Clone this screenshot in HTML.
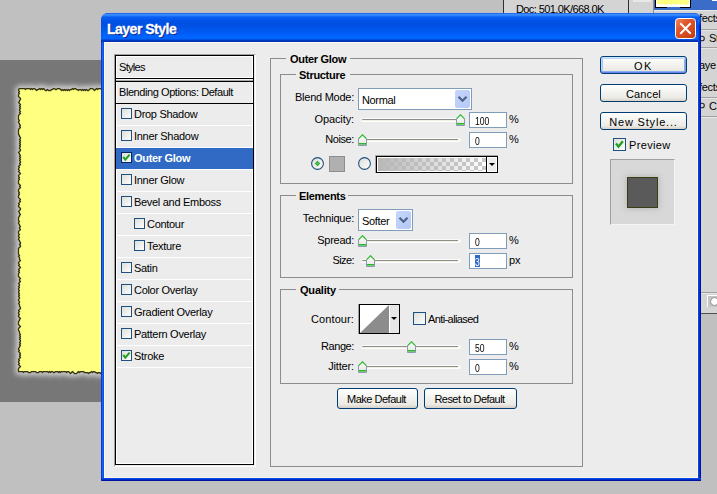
<!DOCTYPE html>
<html><head><meta charset="utf-8"><title>Layer Style</title>
<style>
html,body{margin:0;padding:0;width:717px;height:494px;overflow:hidden;background:#c0c0c0}
body{position:relative;font-family:"Liberation Sans",sans-serif}
body>div{position:absolute}
.t{white-space:nowrap}
</style></head><body>
<div style="left:0px;top:0px;width:717px;height:494px;background:#c0c0c0"></div>
<div style="left:0px;top:60px;width:110px;height:342px;background:#777777"></div>
<svg style="position:absolute;left:0;top:0" width="120" height="420" viewBox="0 0 120 420">
<defs><filter id="gl" x="-20%" y="-20%" width="140%" height="140%"><feGaussianBlur stdDeviation="2.6"/></filter></defs>
<polygon points="19.5,88.5 20.5,88.5 21.5,88.5 22.5,88.5 23.5,88.5 24.5,88.5 25.5,89.5 26.5,88.5 27.5,88.5 28.5,88.5 29.5,88.5 30.5,89.5 31.5,88.5 32.5,89.5 33.5,88.5 34.5,88.5 35.5,89.5 36.5,90.5 37.5,89.5 38.5,89.5 39.5,88.5 40.5,89.5 41.5,88.5 42.5,89.5 43.5,88.5 44.5,89.5 45.5,90.5 46.5,90.5 47.5,89.5 48.5,90.5 49.5,90.5 50.5,90.5 51.5,89.5 52.5,89.5 53.5,88.5 54.5,88.5 55.5,89.5 56.5,89.5 57.5,88.5 58.5,88.5 59.5,88.5 60.5,89.5 61.5,90.5 62.5,89.5 63.5,90.5 64.5,89.5 65.5,90.5 66.5,89.5 67.5,90.5 68.5,89.5 69.5,90.5 70.5,89.5 71.5,89.5 72.5,88.5 73.5,89.5 74.5,88.5 75.5,88.5 76.5,89.5 77.5,89.5 78.5,90.5 79.5,89.5 80.5,89.5 81.5,90.5 82.5,89.5 83.5,90.5 84.5,89.5 85.5,90.5 86.5,89.5 87.5,90.5 88.5,90.5 89.5,89.5 90.5,88.5 91.5,88.5 92.5,88.5 93.5,89.5 94.5,90.5 95.5,89.5 96.5,88.5 97.5,89.5 98.5,88.5 99.5,88.5 100.5,88.5 101.5,89.5 102.5,89.5 103.5,90.5 104.5,89.5 105.5,88.5 106.5,88.5 107.5,89.5 108.5,89.5 109.5,88.5 110.5,89.5 111.5,90.5 112.5,89.5 113.5,90.5 114.5,89.5 115,88.5 115,372.5 114.5,371.5 113.5,371.5 112.5,372.5 111.5,373.5 110.5,373.5 109.5,372.5 108.5,371.5 107.5,372.5 106.5,371.5 105.5,371.5 104.5,371.5 103.5,371.5 102.5,372.5 101.5,372.5 100.5,373.5 99.5,372.5 98.5,372.5 97.5,373.5 96.5,372.5 95.5,372.5 94.5,371.5 93.5,371.5 92.5,372.5 91.5,371.5 90.5,372.5 89.5,372.5 88.5,373.5 87.5,372.5 86.5,372.5 85.5,372.5 84.5,372.5 83.5,371.5 82.5,371.5 81.5,371.5 80.5,371.5 79.5,372.5 78.5,371.5 77.5,372.5 76.5,373.5 75.5,373.5 74.5,373.5 73.5,372.5 72.5,371.5 71.5,372.5 70.5,373.5 69.5,372.5 68.5,371.5 67.5,371.5 66.5,372.5 65.5,371.5 64.5,371.5 63.5,371.5 62.5,371.5 61.5,371.5 60.5,372.5 59.5,371.5 58.5,372.5 57.5,371.5 56.5,371.5 55.5,371.5 54.5,372.5 53.5,372.5 52.5,371.5 51.5,371.5 50.5,372.5 49.5,371.5 48.5,372.5 47.5,371.5 46.5,371.5 45.5,371.5 44.5,371.5 43.5,371.5 42.5,372.5 41.5,371.5 40.5,371.5 39.5,371.5 38.5,372.5 37.5,372.5 36.5,372.5 35.5,371.5 34.5,371.5 33.5,371.5 32.5,371.5 31.5,371.5 30.5,372.5 29.5,372.5 28.5,372.5 27.5,371.5 26.5,371.5 25.5,371.5 24.5,371.5 23.5,372.5 22.5,371.5 21.5,371.5 20.5,371.5 19.5,371.5 18.5,371.5 18.5,370.5 18.5,369.5 18.5,368.5 19.5,367.5 20.5,366.5 19.5,365.5 18.5,364.5 19.5,363.5 18.5,362.5 18.5,361.5 19.5,360.5 18.5,359.5 19.5,358.5 20.5,357.5 19.5,356.5 20.5,355.5 19.5,354.5 20.5,353.5 19.5,352.5 18.5,351.5 19.5,350.5 18.5,349.5 18.5,348.5 19.5,347.5 19.5,346.5 20.5,345.5 19.5,344.5 20.5,343.5 19.5,342.5 20.5,341.5 20.5,340.5 19.5,339.5 20.5,338.5 19.5,337.5 20.5,336.5 19.5,335.5 20.5,334.5 19.5,333.5 19.5,332.5 19.5,331.5 18.5,330.5 18.5,329.5 18.5,328.5 19.5,327.5 20.5,326.5 19.5,325.5 18.5,324.5 18.5,323.5 18.5,322.5 18.5,321.5 19.5,320.5 19.5,319.5 20.5,318.5 19.5,317.5 18.5,316.5 18.5,315.5 19.5,314.5 18.5,313.5 18.5,312.5 19.5,311.5 18.5,310.5 19.5,309.5 20.5,308.5 20.5,307.5 19.5,306.5 19.5,305.5 19.5,304.5 18.5,303.5 19.5,302.5 19.5,301.5 18.5,300.5 18.5,299.5 19.5,298.5 19.5,297.5 18.5,296.5 19.5,295.5 18.5,294.5 19.5,293.5 18.5,292.5 18.5,291.5 19.5,290.5 18.5,289.5 18.5,288.5 19.5,287.5 18.5,286.5 19.5,285.5 19.5,284.5 18.5,283.5 19.5,282.5 20.5,281.5 19.5,280.5 19.5,279.5 20.5,278.5 19.5,277.5 18.5,276.5 18.5,275.5 18.5,274.5 18.5,273.5 19.5,272.5 18.5,271.5 19.5,270.5 18.5,269.5 19.5,268.5 20.5,267.5 19.5,266.5 18.5,265.5 19.5,264.5 18.5,263.5 18.5,262.5 19.5,261.5 20.5,260.5 19.5,259.5 19.5,258.5 19.5,257.5 18.5,256.5 19.5,255.5 18.5,254.5 18.5,253.5 18.5,252.5 18.5,251.5 18.5,250.5 18.5,249.5 18.5,248.5 19.5,247.5 20.5,246.5 20.5,245.5 19.5,244.5 20.5,243.5 20.5,242.5 19.5,241.5 19.5,240.5 18.5,239.5 18.5,238.5 19.5,237.5 18.5,236.5 18.5,235.5 19.5,234.5 18.5,233.5 18.5,232.5 18.5,231.5 19.5,230.5 20.5,229.5 19.5,228.5 19.5,227.5 20.5,226.5 19.5,225.5 19.5,224.5 18.5,223.5 18.5,222.5 19.5,221.5 18.5,220.5 18.5,219.5 18.5,218.5 18.5,217.5 19.5,216.5 19.5,215.5 20.5,214.5 19.5,213.5 19.5,212.5 18.5,211.5 19.5,210.5 20.5,209.5 20.5,208.5 19.5,207.5 18.5,206.5 18.5,205.5 19.5,204.5 18.5,203.5 19.5,202.5 20.5,201.5 19.5,200.5 20.5,199.5 19.5,198.5 18.5,197.5 18.5,196.5 18.5,195.5 19.5,194.5 18.5,193.5 19.5,192.5 18.5,191.5 18.5,190.5 18.5,189.5 19.5,188.5 20.5,187.5 19.5,186.5 20.5,185.5 19.5,184.5 18.5,183.5 18.5,182.5 18.5,181.5 18.5,180.5 19.5,179.5 18.5,178.5 19.5,177.5 18.5,176.5 18.5,175.5 19.5,174.5 20.5,173.5 19.5,172.5 18.5,171.5 19.5,170.5 18.5,169.5 18.5,168.5 19.5,167.5 18.5,166.5 19.5,165.5 20.5,164.5 19.5,163.5 20.5,162.5 20.5,161.5 19.5,160.5 20.5,159.5 19.5,158.5 20.5,157.5 19.5,156.5 20.5,155.5 19.5,154.5 19.5,153.5 18.5,152.5 19.5,151.5 20.5,150.5 20.5,149.5 19.5,148.5 19.5,147.5 20.5,146.5 19.5,145.5 20.5,144.5 19.5,143.5 20.5,142.5 19.5,141.5 20.5,140.5 19.5,139.5 20.5,138.5 20.5,137.5 19.5,136.5 19.5,135.5 18.5,134.5 18.5,133.5 18.5,132.5 18.5,131.5 18.5,130.5 18.5,129.5 19.5,128.5 20.5,127.5 19.5,126.5 20.5,125.5 19.5,124.5 19.5,123.5 18.5,122.5 18.5,121.5 19.5,120.5 18.5,119.5 18.5,118.5 18.5,117.5 18.5,116.5 18.5,115.5 19.5,114.5 20.5,113.5 19.5,112.5 20.5,111.5 19.5,110.5 19.5,109.5 20.5,108.5 19.5,107.5 20.5,106.5 19.5,105.5 20.5,104.5 19.5,103.5 18.5,102.5 19.5,101.5 19.5,100.5 20.5,99.5 20.5,98.5 19.5,97.5 18.5,96.5 18.5,95.5 18.5,94.5 19.5,93.5 18.5,92.5 19.5,91.5 18.5,90.5 18.5,89.5 19.5,88.5" fill="none" stroke="#d0d0d0" stroke-width="6" filter="url(#gl)"/>
<polygon points="19.5,88.5 20.5,88.5 21.5,88.5 22.5,88.5 23.5,88.5 24.5,88.5 25.5,89.5 26.5,88.5 27.5,88.5 28.5,88.5 29.5,88.5 30.5,89.5 31.5,88.5 32.5,89.5 33.5,88.5 34.5,88.5 35.5,89.5 36.5,90.5 37.5,89.5 38.5,89.5 39.5,88.5 40.5,89.5 41.5,88.5 42.5,89.5 43.5,88.5 44.5,89.5 45.5,90.5 46.5,90.5 47.5,89.5 48.5,90.5 49.5,90.5 50.5,90.5 51.5,89.5 52.5,89.5 53.5,88.5 54.5,88.5 55.5,89.5 56.5,89.5 57.5,88.5 58.5,88.5 59.5,88.5 60.5,89.5 61.5,90.5 62.5,89.5 63.5,90.5 64.5,89.5 65.5,90.5 66.5,89.5 67.5,90.5 68.5,89.5 69.5,90.5 70.5,89.5 71.5,89.5 72.5,88.5 73.5,89.5 74.5,88.5 75.5,88.5 76.5,89.5 77.5,89.5 78.5,90.5 79.5,89.5 80.5,89.5 81.5,90.5 82.5,89.5 83.5,90.5 84.5,89.5 85.5,90.5 86.5,89.5 87.5,90.5 88.5,90.5 89.5,89.5 90.5,88.5 91.5,88.5 92.5,88.5 93.5,89.5 94.5,90.5 95.5,89.5 96.5,88.5 97.5,89.5 98.5,88.5 99.5,88.5 100.5,88.5 101.5,89.5 102.5,89.5 103.5,90.5 104.5,89.5 105.5,88.5 106.5,88.5 107.5,89.5 108.5,89.5 109.5,88.5 110.5,89.5 111.5,90.5 112.5,89.5 113.5,90.5 114.5,89.5 115,88.5 115,372.5 114.5,371.5 113.5,371.5 112.5,372.5 111.5,373.5 110.5,373.5 109.5,372.5 108.5,371.5 107.5,372.5 106.5,371.5 105.5,371.5 104.5,371.5 103.5,371.5 102.5,372.5 101.5,372.5 100.5,373.5 99.5,372.5 98.5,372.5 97.5,373.5 96.5,372.5 95.5,372.5 94.5,371.5 93.5,371.5 92.5,372.5 91.5,371.5 90.5,372.5 89.5,372.5 88.5,373.5 87.5,372.5 86.5,372.5 85.5,372.5 84.5,372.5 83.5,371.5 82.5,371.5 81.5,371.5 80.5,371.5 79.5,372.5 78.5,371.5 77.5,372.5 76.5,373.5 75.5,373.5 74.5,373.5 73.5,372.5 72.5,371.5 71.5,372.5 70.5,373.5 69.5,372.5 68.5,371.5 67.5,371.5 66.5,372.5 65.5,371.5 64.5,371.5 63.5,371.5 62.5,371.5 61.5,371.5 60.5,372.5 59.5,371.5 58.5,372.5 57.5,371.5 56.5,371.5 55.5,371.5 54.5,372.5 53.5,372.5 52.5,371.5 51.5,371.5 50.5,372.5 49.5,371.5 48.5,372.5 47.5,371.5 46.5,371.5 45.5,371.5 44.5,371.5 43.5,371.5 42.5,372.5 41.5,371.5 40.5,371.5 39.5,371.5 38.5,372.5 37.5,372.5 36.5,372.5 35.5,371.5 34.5,371.5 33.5,371.5 32.5,371.5 31.5,371.5 30.5,372.5 29.5,372.5 28.5,372.5 27.5,371.5 26.5,371.5 25.5,371.5 24.5,371.5 23.5,372.5 22.5,371.5 21.5,371.5 20.5,371.5 19.5,371.5 18.5,371.5 18.5,370.5 18.5,369.5 18.5,368.5 19.5,367.5 20.5,366.5 19.5,365.5 18.5,364.5 19.5,363.5 18.5,362.5 18.5,361.5 19.5,360.5 18.5,359.5 19.5,358.5 20.5,357.5 19.5,356.5 20.5,355.5 19.5,354.5 20.5,353.5 19.5,352.5 18.5,351.5 19.5,350.5 18.5,349.5 18.5,348.5 19.5,347.5 19.5,346.5 20.5,345.5 19.5,344.5 20.5,343.5 19.5,342.5 20.5,341.5 20.5,340.5 19.5,339.5 20.5,338.5 19.5,337.5 20.5,336.5 19.5,335.5 20.5,334.5 19.5,333.5 19.5,332.5 19.5,331.5 18.5,330.5 18.5,329.5 18.5,328.5 19.5,327.5 20.5,326.5 19.5,325.5 18.5,324.5 18.5,323.5 18.5,322.5 18.5,321.5 19.5,320.5 19.5,319.5 20.5,318.5 19.5,317.5 18.5,316.5 18.5,315.5 19.5,314.5 18.5,313.5 18.5,312.5 19.5,311.5 18.5,310.5 19.5,309.5 20.5,308.5 20.5,307.5 19.5,306.5 19.5,305.5 19.5,304.5 18.5,303.5 19.5,302.5 19.5,301.5 18.5,300.5 18.5,299.5 19.5,298.5 19.5,297.5 18.5,296.5 19.5,295.5 18.5,294.5 19.5,293.5 18.5,292.5 18.5,291.5 19.5,290.5 18.5,289.5 18.5,288.5 19.5,287.5 18.5,286.5 19.5,285.5 19.5,284.5 18.5,283.5 19.5,282.5 20.5,281.5 19.5,280.5 19.5,279.5 20.5,278.5 19.5,277.5 18.5,276.5 18.5,275.5 18.5,274.5 18.5,273.5 19.5,272.5 18.5,271.5 19.5,270.5 18.5,269.5 19.5,268.5 20.5,267.5 19.5,266.5 18.5,265.5 19.5,264.5 18.5,263.5 18.5,262.5 19.5,261.5 20.5,260.5 19.5,259.5 19.5,258.5 19.5,257.5 18.5,256.5 19.5,255.5 18.5,254.5 18.5,253.5 18.5,252.5 18.5,251.5 18.5,250.5 18.5,249.5 18.5,248.5 19.5,247.5 20.5,246.5 20.5,245.5 19.5,244.5 20.5,243.5 20.5,242.5 19.5,241.5 19.5,240.5 18.5,239.5 18.5,238.5 19.5,237.5 18.5,236.5 18.5,235.5 19.5,234.5 18.5,233.5 18.5,232.5 18.5,231.5 19.5,230.5 20.5,229.5 19.5,228.5 19.5,227.5 20.5,226.5 19.5,225.5 19.5,224.5 18.5,223.5 18.5,222.5 19.5,221.5 18.5,220.5 18.5,219.5 18.5,218.5 18.5,217.5 19.5,216.5 19.5,215.5 20.5,214.5 19.5,213.5 19.5,212.5 18.5,211.5 19.5,210.5 20.5,209.5 20.5,208.5 19.5,207.5 18.5,206.5 18.5,205.5 19.5,204.5 18.5,203.5 19.5,202.5 20.5,201.5 19.5,200.5 20.5,199.5 19.5,198.5 18.5,197.5 18.5,196.5 18.5,195.5 19.5,194.5 18.5,193.5 19.5,192.5 18.5,191.5 18.5,190.5 18.5,189.5 19.5,188.5 20.5,187.5 19.5,186.5 20.5,185.5 19.5,184.5 18.5,183.5 18.5,182.5 18.5,181.5 18.5,180.5 19.5,179.5 18.5,178.5 19.5,177.5 18.5,176.5 18.5,175.5 19.5,174.5 20.5,173.5 19.5,172.5 18.5,171.5 19.5,170.5 18.5,169.5 18.5,168.5 19.5,167.5 18.5,166.5 19.5,165.5 20.5,164.5 19.5,163.5 20.5,162.5 20.5,161.5 19.5,160.5 20.5,159.5 19.5,158.5 20.5,157.5 19.5,156.5 20.5,155.5 19.5,154.5 19.5,153.5 18.5,152.5 19.5,151.5 20.5,150.5 20.5,149.5 19.5,148.5 19.5,147.5 20.5,146.5 19.5,145.5 20.5,144.5 19.5,143.5 20.5,142.5 19.5,141.5 20.5,140.5 19.5,139.5 20.5,138.5 20.5,137.5 19.5,136.5 19.5,135.5 18.5,134.5 18.5,133.5 18.5,132.5 18.5,131.5 18.5,130.5 18.5,129.5 19.5,128.5 20.5,127.5 19.5,126.5 20.5,125.5 19.5,124.5 19.5,123.5 18.5,122.5 18.5,121.5 19.5,120.5 18.5,119.5 18.5,118.5 18.5,117.5 18.5,116.5 18.5,115.5 19.5,114.5 20.5,113.5 19.5,112.5 20.5,111.5 19.5,110.5 19.5,109.5 20.5,108.5 19.5,107.5 20.5,106.5 19.5,105.5 20.5,104.5 19.5,103.5 18.5,102.5 19.5,101.5 19.5,100.5 20.5,99.5 20.5,98.5 19.5,97.5 18.5,96.5 18.5,95.5 18.5,94.5 19.5,93.5 18.5,92.5 19.5,91.5 18.5,90.5 18.5,89.5 19.5,88.5" fill="#ffff80" stroke="#34320a" stroke-width="1.25" stroke-linejoin="round"/>
</svg>
<div style="left:503px;top:0px;width:214px;height:13px;background:#d4d4d4"></div>
<div style="left:503px;top:0px;width:1px;height:13px;background:#303030"></div>
<div class="t" style="left:516px;top:3px;font:11px/13px 'Liberation Sans',sans-serif;letter-spacing:-0.6px;color:#000;">Doc: 501.0K/668.0K</div>
<div style="left:628px;top:0px;width:1px;height:13px;background:#303030"></div>
<div style="left:633px;top:0px;width:18px;height:2px;background:#e8e8e8"></div>
<div style="left:653px;top:0px;width:1px;height:13px;background:#909090"></div>
<div style="left:654px;top:0px;width:63px;height:10px;background:#3a6cc8"></div>
<div style="left:655px;top:0px;width:36px;height:8px;background:#000"></div>
<div style="left:667px;top:7px;width:13px;height:1px;background:#3a6cc8"></div>
<div style="left:656px;top:0px;width:34px;height:7px;background:#fff"></div>
<div style="left:657px;top:0px;width:32px;height:5px;background:#ffff80"></div>
<div style="left:657px;top:4px;width:32px;height:1px;background:repeating-linear-gradient(to right,#fff 0 3px,#ffff80 3px 5px)"></div>
<div style="left:712px;top:0px;width:5px;height:1px;background:#fff"></div>
<div style="left:654px;top:10px;width:63px;height:1px;background:#e8e8e8"></div>
<div style="left:701px;top:11px;width:16px;height:281px;background:#d4d4d4"></div>
<div class="t" style="left:699px;top:12px;font:11px/13px 'Liberation Sans',sans-serif;letter-spacing:-0.3px;color:#000;">fects</div>
<div style="left:701px;top:29px;width:16px;height:1px;background:#a0a0a0"></div>
<div style="left:701px;top:30px;width:16px;height:1px;background:#e6e6e6"></div>
<div class="t" style="left:709px;top:32px;font:11px/13px 'Liberation Sans',sans-serif;letter-spacing:-0.3px;color:#000;">St</div>
<div style="left:701px;top:47px;width:16px;height:1px;background:#a0a0a0"></div>
<div style="left:701px;top:48px;width:16px;height:1px;background:#e6e6e6"></div>
<div class="t" style="left:699px;top:59px;font:11px/13px 'Liberation Sans',sans-serif;letter-spacing:-0.3px;color:#000;">aye</div>
<div class="t" style="left:699px;top:81px;font:11px/13px 'Liberation Sans',sans-serif;letter-spacing:-0.3px;color:#000;">fects</div>
<div style="left:701px;top:97px;width:16px;height:1px;background:#a0a0a0"></div>
<div style="left:701px;top:98px;width:16px;height:1px;background:#e6e6e6"></div>
<div class="t" style="left:709px;top:100px;font:11px/13px 'Liberation Sans',sans-serif;letter-spacing:-0.3px;color:#000;">Co</div>
<svg style="position:absolute;left:699px;top:100px" width="8" height="10"><circle cx="3" cy="5.5" r="2.3" fill="none" stroke="#303030" stroke-width="1.1"/></svg>
<svg style="position:absolute;left:699px;top:33px" width="8" height="10"><circle cx="3" cy="5.5" r="2.3" fill="none" stroke="#303030" stroke-width="1.1"/></svg>
<div style="left:701px;top:116px;width:16px;height:1px;background:#a0a0a0"></div>
<div style="left:701px;top:117px;width:16px;height:1px;background:#e6e6e6"></div>
<div style="left:701px;top:292px;width:16px;height:1px;background:#a0a0a0"></div>
<div style="left:701px;top:293px;width:16px;height:1px;background:#e6e6e6"></div>
<div style="left:701px;top:294px;width:16px;height:19px;background:#d4d4d4"></div>
<div style="left:707px;top:295px;width:12px;height:11px;background:#c4c4c4;border-top:1px solid #fff;border-left:1px solid #fff"></div>
<div style="left:710px;top:297px;width:7px;height:7px;border-radius:50%;background:#fff;border:1px solid #909090"></div>
<div style="left:701px;top:313px;width:16px;height:1px;background:#505050"></div>
<div style="left:101px;top:13px;width:600px;height:468px;background:#0a4ae6;border-radius:7px 7px 0 0"></div>
<div style="left:101px;top:13px;width:600px;height:29px;border-radius:7px 7px 0 0;background:linear-gradient(to bottom,#0a46d4 0px,#3a8cff 1px,#3a8cff 2px,#0a60f4 4px,#0052e6 8px,#0050e2 12px,#005cf6 20px,#0066ff 24px,#0062fa 26px,#0040c8 27px,#0030b0 28px,#0038c0 29px)"></div>
<div style="left:101px;top:42px;width:1px;height:439px;background:#0838d0"></div>
<div style="left:102px;top:42px;width:1px;height:439px;background:#1664f8"></div>
<div style="left:103px;top:42px;width:1px;height:439px;background:#0a52e8"></div>
<div style="left:698px;top:20px;width:1px;height:461px;background:linear-gradient(#3a7cf8,#0842e0 6px)"></div>
<div style="left:699px;top:19px;width:1px;height:462px;background:linear-gradient(#1a5ce8,#0030c8 6px)"></div>
<div style="left:700px;top:21px;width:1px;height:460px;background:linear-gradient(#0a3ad0,#0014a0 6px)"></div>
<div style="left:101px;top:478px;width:600px;height:1px;background:#0848e8"></div>
<div style="left:101px;top:479px;width:600px;height:1px;background:#0030c8"></div>
<div style="left:101px;top:480px;width:600px;height:1px;background:#0012a0"></div>
<div style="left:101px;top:478px;width:1px;height:3px;background:#0830c8"></div>
<div style="left:104px;top:42px;width:594px;height:436px;background:#fdf8e8"></div>
<div style="left:105px;top:43px;width:592px;height:434px;background:#ececec"></div>
<div class="t" style="left:107px;top:21px;font:bold 14px/16px 'Liberation Sans',sans-serif;letter-spacing:-0.5px;color:#fff;-webkit-text-stroke:0.3px #fff;text-shadow:1px 1px 0 #0a1a80">Layer Style</div>
<svg style="position:absolute;left:675px;top:18px" width="21" height="21" viewBox="0 0 21 21">
<defs><linearGradient id="cg" x1="0" y1="0" x2="1" y2="1"><stop offset="0" stop-color="#f08a64"/><stop offset="0.35" stop-color="#e2582c"/><stop offset="1" stop-color="#c43a0c"/></linearGradient></defs>
<rect x="0.5" y="0.5" width="20" height="20" rx="3" fill="url(#cg)" stroke="#fff" stroke-width="1"/>
<path d="M6 6 L15 15 M15 6 L6 15" stroke="#fff" stroke-width="2" stroke-linecap="square"/>
</svg>
<div style="left:114px;top:54px;width:140px;height:411px;border-top:1px solid #a0a0a0;border-left:1px solid #a0a0a0;border-right:1px solid #fff;border-bottom:1px solid #fff"></div>
<div style="left:115px;top:55px;width:139px;height:410px;box-sizing:border-box;border:1px solid #000"></div>
<div style="left:116px;top:56px;width:137px;height:408px;box-sizing:border-box;border:1px solid #fff;background:#ececec"></div>
<div style="left:116px;top:77px;width:137px;height:1px;background:#fff"></div>
<div style="left:116px;top:78px;width:137px;height:1px;background:#000"></div>
<div style="left:116px;top:79px;width:137px;height:1px;background:#f4f4f4"></div>
<div style="left:116px;top:80px;width:137px;height:1px;background:#a8a8a8"></div>
<div style="left:116px;top:81px;width:137px;height:1px;background:#000"></div>
<div style="left:116px;top:103px;width:137px;height:1px;background:#000"></div>
<div class="t" style="left:119px;top:61px;font:11px/13px 'Liberation Sans',sans-serif;letter-spacing:-0.7px;color:#000;">Styles</div>
<div class="t" style="left:119px;top:86px;font:11px/13px 'Liberation Sans',sans-serif;letter-spacing:-0.43px;color:#000;">Blending Options: Default</div>
<svg style="position:absolute;left:121px;top:108px" width="11" height="11" viewBox="0 0 11 11">
<defs><linearGradient id="cb121_108" x1="0" y1="0" x2="1" y2="1"><stop offset="0" stop-color="#dcdcd7"/><stop offset="1" stop-color="#ffffff"/></linearGradient></defs>
<rect x="0.5" y="0.5" width="10" height="10" fill="url(#cb121_108)" stroke="#1c5180"/></svg>
<div class="t" style="left:134px;top:108px;font:11px/13px 'Liberation Sans',sans-serif;letter-spacing:-0.3px;color:#000;">Drop Shadow</div>
<div style="left:116px;top:125px;width:137px;height:1px;background:#fff"></div>
<svg style="position:absolute;left:121px;top:130px" width="11" height="11" viewBox="0 0 11 11">
<defs><linearGradient id="cb121_130" x1="0" y1="0" x2="1" y2="1"><stop offset="0" stop-color="#dcdcd7"/><stop offset="1" stop-color="#ffffff"/></linearGradient></defs>
<rect x="0.5" y="0.5" width="10" height="10" fill="url(#cb121_130)" stroke="#1c5180"/></svg>
<div class="t" style="left:134px;top:130px;font:11px/13px 'Liberation Sans',sans-serif;letter-spacing:-0.3px;color:#000;">Inner Shadow</div>
<div style="left:116px;top:147px;width:137px;height:1px;background:#fff"></div>
<div style="left:116px;top:148px;width:137px;height:21px;background:#316ac5"></div>
<svg style="position:absolute;left:121px;top:152px" width="11" height="11" viewBox="0 0 11 11">
<defs><linearGradient id="cb121_152" x1="0" y1="0" x2="1" y2="1"><stop offset="0" stop-color="#dcdcd7"/><stop offset="1" stop-color="#ffffff"/></linearGradient></defs>
<rect x="0.5" y="0.5" width="10" height="10" fill="url(#cb121_152)" stroke="#0a2460"/><path d="M2.2 4.9 L4.3 7.6 L8.6 2.6" fill="none" stroke="#21a121" stroke-width="2.1"/></svg>
<div class="t" style="left:134px;top:152px;font:bold 11px/13px 'Liberation Sans',sans-serif;letter-spacing:-0.3px;color:#fff;">Outer Glow</div>
<div style="left:116px;top:169px;width:137px;height:1px;background:#fff"></div>
<svg style="position:absolute;left:121px;top:174px" width="11" height="11" viewBox="0 0 11 11">
<defs><linearGradient id="cb121_174" x1="0" y1="0" x2="1" y2="1"><stop offset="0" stop-color="#dcdcd7"/><stop offset="1" stop-color="#ffffff"/></linearGradient></defs>
<rect x="0.5" y="0.5" width="10" height="10" fill="url(#cb121_174)" stroke="#1c5180"/></svg>
<div class="t" style="left:134px;top:174px;font:11px/13px 'Liberation Sans',sans-serif;letter-spacing:-0.3px;color:#000;">Inner Glow</div>
<div style="left:116px;top:191px;width:137px;height:1px;background:#fff"></div>
<svg style="position:absolute;left:121px;top:196px" width="11" height="11" viewBox="0 0 11 11">
<defs><linearGradient id="cb121_196" x1="0" y1="0" x2="1" y2="1"><stop offset="0" stop-color="#dcdcd7"/><stop offset="1" stop-color="#ffffff"/></linearGradient></defs>
<rect x="0.5" y="0.5" width="10" height="10" fill="url(#cb121_196)" stroke="#1c5180"/></svg>
<div class="t" style="left:134px;top:196px;font:11px/13px 'Liberation Sans',sans-serif;letter-spacing:-0.3px;color:#000;">Bevel and Emboss</div>
<div style="left:116px;top:213px;width:137px;height:1px;background:#fff"></div>
<svg style="position:absolute;left:134px;top:218px" width="11" height="11" viewBox="0 0 11 11">
<defs><linearGradient id="cb134_218" x1="0" y1="0" x2="1" y2="1"><stop offset="0" stop-color="#dcdcd7"/><stop offset="1" stop-color="#ffffff"/></linearGradient></defs>
<rect x="0.5" y="0.5" width="10" height="10" fill="url(#cb134_218)" stroke="#1c5180"/></svg>
<div class="t" style="left:147px;top:218px;font:11px/13px 'Liberation Sans',sans-serif;letter-spacing:-0.3px;color:#000;">Contour</div>
<div style="left:116px;top:235px;width:137px;height:1px;background:#fff"></div>
<svg style="position:absolute;left:134px;top:240px" width="11" height="11" viewBox="0 0 11 11">
<defs><linearGradient id="cb134_240" x1="0" y1="0" x2="1" y2="1"><stop offset="0" stop-color="#dcdcd7"/><stop offset="1" stop-color="#ffffff"/></linearGradient></defs>
<rect x="0.5" y="0.5" width="10" height="10" fill="url(#cb134_240)" stroke="#1c5180"/></svg>
<div class="t" style="left:147px;top:240px;font:11px/13px 'Liberation Sans',sans-serif;letter-spacing:-0.3px;color:#000;">Texture</div>
<div style="left:116px;top:257px;width:137px;height:1px;background:#fff"></div>
<svg style="position:absolute;left:121px;top:262px" width="11" height="11" viewBox="0 0 11 11">
<defs><linearGradient id="cb121_262" x1="0" y1="0" x2="1" y2="1"><stop offset="0" stop-color="#dcdcd7"/><stop offset="1" stop-color="#ffffff"/></linearGradient></defs>
<rect x="0.5" y="0.5" width="10" height="10" fill="url(#cb121_262)" stroke="#1c5180"/></svg>
<div class="t" style="left:134px;top:262px;font:11px/13px 'Liberation Sans',sans-serif;letter-spacing:-0.3px;color:#000;">Satin</div>
<div style="left:116px;top:279px;width:137px;height:1px;background:#fff"></div>
<svg style="position:absolute;left:121px;top:284px" width="11" height="11" viewBox="0 0 11 11">
<defs><linearGradient id="cb121_284" x1="0" y1="0" x2="1" y2="1"><stop offset="0" stop-color="#dcdcd7"/><stop offset="1" stop-color="#ffffff"/></linearGradient></defs>
<rect x="0.5" y="0.5" width="10" height="10" fill="url(#cb121_284)" stroke="#1c5180"/></svg>
<div class="t" style="left:134px;top:284px;font:11px/13px 'Liberation Sans',sans-serif;letter-spacing:-0.3px;color:#000;">Color Overlay</div>
<div style="left:116px;top:301px;width:137px;height:1px;background:#fff"></div>
<svg style="position:absolute;left:121px;top:306px" width="11" height="11" viewBox="0 0 11 11">
<defs><linearGradient id="cb121_306" x1="0" y1="0" x2="1" y2="1"><stop offset="0" stop-color="#dcdcd7"/><stop offset="1" stop-color="#ffffff"/></linearGradient></defs>
<rect x="0.5" y="0.5" width="10" height="10" fill="url(#cb121_306)" stroke="#1c5180"/></svg>
<div class="t" style="left:134px;top:306px;font:11px/13px 'Liberation Sans',sans-serif;letter-spacing:-0.3px;color:#000;">Gradient Overlay</div>
<div style="left:116px;top:323px;width:137px;height:1px;background:#fff"></div>
<svg style="position:absolute;left:121px;top:328px" width="11" height="11" viewBox="0 0 11 11">
<defs><linearGradient id="cb121_328" x1="0" y1="0" x2="1" y2="1"><stop offset="0" stop-color="#dcdcd7"/><stop offset="1" stop-color="#ffffff"/></linearGradient></defs>
<rect x="0.5" y="0.5" width="10" height="10" fill="url(#cb121_328)" stroke="#1c5180"/></svg>
<div class="t" style="left:134px;top:328px;font:11px/13px 'Liberation Sans',sans-serif;letter-spacing:-0.3px;color:#000;">Pattern Overlay</div>
<div style="left:116px;top:345px;width:137px;height:1px;background:#fff"></div>
<svg style="position:absolute;left:121px;top:350px" width="11" height="11" viewBox="0 0 11 11">
<defs><linearGradient id="cb121_350" x1="0" y1="0" x2="1" y2="1"><stop offset="0" stop-color="#dcdcd7"/><stop offset="1" stop-color="#ffffff"/></linearGradient></defs>
<rect x="0.5" y="0.5" width="10" height="10" fill="url(#cb121_350)" stroke="#1c5180"/><path d="M2.2 4.9 L4.3 7.6 L8.6 2.6" fill="none" stroke="#21a121" stroke-width="2.1"/></svg>
<div class="t" style="left:134px;top:350px;font:11px/13px 'Liberation Sans',sans-serif;letter-spacing:-0.3px;color:#000;">Stroke</div>
<div style="left:116px;top:367px;width:137px;height:1px;background:#fff"></div>
<div style="left:600px;top:56px;width:87px;height:18px;box-sizing:border-box;border:1px solid #003c74;border-radius:3px;background:linear-gradient(to bottom,#ffffff 0%,#f4f4f0 40%,#ecebe6 80%,#d6d0c5 100%);box-shadow:inset 0 1px 0 #cee7ff,inset 0 -1px 0 #6982ee,inset 1px 0 0 #b8d6fb,inset -1px 0 0 #7da2ce,inset 0 2px 0 #bcd4f6,inset 0 -2px 0 #89adf4,inset 2px 0 0 #a8c8f8,inset -2px 0 0 #89adf4;"></div>
<div class="t" style="left:600px;width:87px;text-align:center;top:60px;font:11px/13px 'Liberation Sans',sans-serif;letter-spacing:1.5px;color:#000">OK</div>
<div style="left:600px;top:84px;width:87px;height:18px;box-sizing:border-box;border:1px solid #003c74;border-radius:3px;background:linear-gradient(to bottom,#ffffff 0%,#f4f4f0 40%,#ecebe6 80%,#d6d0c5 100%);"></div>
<div class="t" style="left:600px;width:87px;text-align:center;top:88px;font:11px/13px 'Liberation Sans',sans-serif;letter-spacing:0.1px;color:#000">Cancel</div>
<div style="left:600px;top:112px;width:87px;height:18px;box-sizing:border-box;border:1px solid #003c74;border-radius:3px;background:linear-gradient(to bottom,#ffffff 0%,#f4f4f0 40%,#ecebe6 80%,#d6d0c5 100%);"></div>
<div class="t" style="left:600px;width:87px;text-align:center;top:116px;font:11px/13px 'Liberation Sans',sans-serif;letter-spacing:0.8px;color:#000">New Style...</div>
<svg style="position:absolute;left:613px;top:138px" width="13" height="13" viewBox="0 0 13 13">
<defs><linearGradient id="cb613_138" x1="0" y1="0" x2="1" y2="1"><stop offset="0" stop-color="#dcdcd7"/><stop offset="1" stop-color="#ffffff"/></linearGradient></defs>
<rect x="0.5" y="0.5" width="12" height="12" fill="url(#cb613_138)" stroke="#1c5180"/><path d="M3 5.6 L5.5 8.6 L9.8 3.3" fill="none" stroke="#21a121" stroke-width="2.3"/></svg>
<div class="t" style="left:629px;top:139px;font:11px/13px 'Liberation Sans',sans-serif;letter-spacing:0.35px;color:#000;">Preview</div>
<div style="left:610px;top:159px;width:65px;height:66px;box-sizing:border-box;border-top:1px solid #a0a0a0;border-left:1px solid #a0a0a0;border-right:1px solid #f4f4f4;border-bottom:1px solid #f4f4f4;background:#d8d8d8"></div>
<div style="left:627px;top:177px;width:31px;height:31px;box-sizing:border-box;border:1px solid #3c3c14;background:#5a5a5a;box-shadow:0 0 6px 1px #b8b8b8"></div>
<div style="left:270px;top:58px;width:313px;height:409px;box-sizing:border-box;border:1px solid #8c8c8c"></div>
<div style="left:286px;top:56px;width:64px;height:5px;background:#ececec"></div>
<div class="t" style="left:290px;top:53px;font:bold 11px/13px 'Liberation Sans',sans-serif;letter-spacing:-0.3px;color:#000;">Outer Glow</div>
<div style="left:280px;top:74px;width:293px;height:110px;box-sizing:border-box;border:1px solid #8c8c8c"></div>
<div style="left:296px;top:72px;width:54px;height:5px;background:#ececec"></div>
<div class="t" style="left:299px;top:69px;font:bold 11px/13px 'Liberation Sans',sans-serif;letter-spacing:-0.3px;color:#000;">Structure</div>
<div style="left:280px;top:195px;width:293px;height:83px;box-sizing:border-box;border:1px solid #8c8c8c"></div>
<div style="left:296px;top:193px;width:52px;height:5px;background:#ececec"></div>
<div class="t" style="left:299px;top:190px;font:bold 11px/13px 'Liberation Sans',sans-serif;letter-spacing:-0.3px;color:#000;">Elements</div>
<div style="left:280px;top:289px;width:293px;height:95px;box-sizing:border-box;border:1px solid #8c8c8c"></div>
<div style="left:296px;top:287px;width:43px;height:5px;background:#ececec"></div>
<div class="t" style="left:300px;top:284px;font:bold 11px/13px 'Liberation Sans',sans-serif;letter-spacing:-0.2px;color:#000;">Quality</div>
<div class="t" style="left:54px;width:300px;text-align:right;top:91px;font:11px/13px 'Liberation Sans',sans-serif;letter-spacing:-0.25px;color:#000">Blend Mode:</div>
<div style="left:358px;top:88px;width:114px;height:22px;box-sizing:border-box;border:1px solid #7f9db9;background:#fff"></div>
<svg style="position:absolute;left:455px;top:90px" width="15" height="18" viewBox="0 0 15 18">
<defs><linearGradient id="sg358" x1="0" y1="0" x2="1" y2="1"><stop offset="0" stop-color="#c6d6fc"/><stop offset="1" stop-color="#b4c8f6"/></linearGradient></defs>
<rect x="0" y="0" width="15" height="18" rx="2" fill="url(#sg358)"/>
<path d="M3.5 6.8 L7.5 10.8 L11.5 6.8" fill="none" stroke="#4d6185" stroke-width="2.2"/></svg>
<div class="t" style="left:362px;top:94px;font:11px/13px 'Liberation Sans',sans-serif;letter-spacing:-0.35px;color:#000;">Normal</div>
<div class="t" style="left:54px;width:300px;text-align:right;top:113px;font:11px/13px 'Liberation Sans',sans-serif;letter-spacing:-0.1px;color:#000">Opacity:</div>
<div style="left:361px;top:118px;width:100px;height:4px;background:#fafafa;border-radius:2px"></div>
<div style="left:362px;top:119px;width:96px;height:1px;background:#8e8d88;border-radius:1px 0 0 0"></div>
<div style="left:362px;top:120px;width:96px;height:1px;background:#f1efe2"></div>
<div style="left:362px;top:121px;width:96px;height:1px;background:#ffffff"></div>
<svg style="position:absolute;left:456px;top:114px" width="9" height="12" viewBox="0 0 9 12">
<defs><linearGradient id="th456_119" x1="0" y1="0" x2="0" y2="1"><stop offset="0" stop-color="#ffffff"/><stop offset="1" stop-color="#e4e4e0"/></linearGradient></defs>
<path d="M0.5 4.5 L4.5 0.5 L8.5 4.5 L8.5 11.5 L0.5 11.5 Z" fill="url(#th456_119)" stroke="#8a9ab0" stroke-width="1"/>
<path d="M0.7 4.6 L4.5 0.8 L8.3 4.6" fill="none" stroke="#3cbf3c" stroke-width="1.3"/>
<rect x="1" y="9" width="7" height="1.6" fill="#28b828"/></svg>
<div style="left:469px;top:112px;width:38px;height:16px;box-sizing:border-box;border:1px solid #7f9db9;background:#fff"></div>
<div class="t" style="left:475px;top:115px;font:10px/13px 'Liberation Sans',sans-serif;letter-spacing:0px;color:#000;transform:scaleX(0.86);transform-origin:0 0">100</div>
<div class="t" style="left:509px;top:113px;font:11px/13px 'Liberation Sans',sans-serif;letter-spacing:0px;color:#000;">%</div>
<div class="t" style="left:54px;width:300px;text-align:right;top:133px;font:11px/13px 'Liberation Sans',sans-serif;letter-spacing:-0.4px;color:#000">Noise:</div>
<div style="left:361px;top:138px;width:100px;height:4px;background:#fafafa;border-radius:2px"></div>
<div style="left:362px;top:139px;width:96px;height:1px;background:#8e8d88;border-radius:1px 0 0 0"></div>
<div style="left:362px;top:140px;width:96px;height:1px;background:#f1efe2"></div>
<div style="left:362px;top:141px;width:96px;height:1px;background:#ffffff"></div>
<svg style="position:absolute;left:358px;top:134px" width="9" height="12" viewBox="0 0 9 12">
<defs><linearGradient id="th358_139" x1="0" y1="0" x2="0" y2="1"><stop offset="0" stop-color="#ffffff"/><stop offset="1" stop-color="#e4e4e0"/></linearGradient></defs>
<path d="M0.5 4.5 L4.5 0.5 L8.5 4.5 L8.5 11.5 L0.5 11.5 Z" fill="url(#th358_139)" stroke="#8a9ab0" stroke-width="1"/>
<path d="M0.7 4.6 L4.5 0.8 L8.3 4.6" fill="none" stroke="#3cbf3c" stroke-width="1.3"/>
<rect x="1" y="9" width="7" height="1.6" fill="#28b828"/></svg>
<div style="left:469px;top:132px;width:38px;height:16px;box-sizing:border-box;border:1px solid #7f9db9;background:#fff"></div>
<div class="t" style="left:475px;top:135px;font:10px/13px 'Liberation Sans',sans-serif;letter-spacing:0px;color:#000;transform:scaleX(0.86);transform-origin:0 0">0</div>
<div class="t" style="left:509px;top:133px;font:11px/13px 'Liberation Sans',sans-serif;letter-spacing:0px;color:#000;">%</div>
<svg style="position:absolute;left:311px;top:157px" width="13" height="13" viewBox="0 0 13 13">
<defs><linearGradient id="rg311" x1="0" y1="0" x2="1" y2="1"><stop offset="0" stop-color="#dcdcd7"/><stop offset="1" stop-color="#ffffff"/></linearGradient></defs>
<circle cx="6.5" cy="6.5" r="5.9" fill="url(#rg311)" stroke="#1c5180" stroke-width="1.1"/><path d="M6.5 3.8 L9.2 6.5 L6.5 9.2 L3.8 6.5 Z" fill="#21a121"/><circle cx="6.5" cy="6.5" r="1.2" fill="#55d055"/></svg>
<div style="left:329px;top:156px;width:16px;height:16px;box-sizing:border-box;border:1px solid #8e8e8e;background:#b0b0b0"></div>
<svg style="position:absolute;left:358px;top:157px" width="13" height="13" viewBox="0 0 13 13">
<defs><linearGradient id="rg358" x1="0" y1="0" x2="1" y2="1"><stop offset="0" stop-color="#dcdcd7"/><stop offset="1" stop-color="#ffffff"/></linearGradient></defs>
<circle cx="6.5" cy="6.5" r="5.9" fill="url(#rg358)" stroke="#1c5180" stroke-width="1.1"/></svg>
<svg style="position:absolute;left:375px;top:155px" width="124" height="19" viewBox="0 0 124 19">
<defs>
<pattern id="chk" x="3" y="3" width="8" height="8" patternUnits="userSpaceOnUse"><rect width="8" height="8" fill="#ffffff"/><rect width="4" height="4" fill="#c8c8c8"/><rect x="4" y="4" width="4" height="4" fill="#c8c8c8"/></pattern>
<linearGradient id="gfade" x1="0" y1="0" x2="1" y2="0"><stop offset="0" stop-color="#b8b8b8" stop-opacity="1"/><stop offset="1" stop-color="#b8b8b8" stop-opacity="0"/></linearGradient>
</defs>
<rect x="0" y="0" width="123" height="18" fill="#a8a8a8"/>
<rect x="1" y="1" width="122" height="17" fill="#000"/>
<rect x="2" y="2" width="120" height="15" fill="#fff"/>
<rect x="3" y="3" width="108" height="13" fill="url(#chk)"/>
<rect x="3" y="3" width="108" height="13" fill="url(#gfade)"/>
<rect x="111" y="2" width="1" height="15" fill="#000"/>
<rect x="113" y="3" width="8" height="13" fill="#ececec"/>
<path d="M114 8 L120 8 L117 11 Z" fill="#000"/>
</svg>
<div class="t" style="left:54px;width:300px;text-align:right;top:212px;font:11px/13px 'Liberation Sans',sans-serif;letter-spacing:-0.2px;color:#000">Technique:</div>
<div style="left:358px;top:209px;width:55px;height:22px;box-sizing:border-box;border:1px solid #7f9db9;background:#fff"></div>
<svg style="position:absolute;left:396px;top:211px" width="15" height="18" viewBox="0 0 15 18">
<defs><linearGradient id="sg358" x1="0" y1="0" x2="1" y2="1"><stop offset="0" stop-color="#c6d6fc"/><stop offset="1" stop-color="#b4c8f6"/></linearGradient></defs>
<rect x="0" y="0" width="15" height="18" rx="2" fill="url(#sg358)"/>
<path d="M3.5 6.8 L7.5 10.8 L11.5 6.8" fill="none" stroke="#4d6185" stroke-width="2.2"/></svg>
<div class="t" style="left:362px;top:215px;font:11px/13px 'Liberation Sans',sans-serif;letter-spacing:-0.35px;color:#000;">Softer</div>
<div class="t" style="left:54px;width:300px;text-align:right;top:234px;font:11px/13px 'Liberation Sans',sans-serif;letter-spacing:-0.25px;color:#000">Spread:</div>
<div style="left:361px;top:239px;width:100px;height:4px;background:#fafafa;border-radius:2px"></div>
<div style="left:362px;top:240px;width:96px;height:1px;background:#8e8d88;border-radius:1px 0 0 0"></div>
<div style="left:362px;top:241px;width:96px;height:1px;background:#f1efe2"></div>
<div style="left:362px;top:242px;width:96px;height:1px;background:#ffffff"></div>
<svg style="position:absolute;left:358px;top:235px" width="9" height="12" viewBox="0 0 9 12">
<defs><linearGradient id="th358_240" x1="0" y1="0" x2="0" y2="1"><stop offset="0" stop-color="#ffffff"/><stop offset="1" stop-color="#e4e4e0"/></linearGradient></defs>
<path d="M0.5 4.5 L4.5 0.5 L8.5 4.5 L8.5 11.5 L0.5 11.5 Z" fill="url(#th358_240)" stroke="#8a9ab0" stroke-width="1"/>
<path d="M0.7 4.6 L4.5 0.8 L8.3 4.6" fill="none" stroke="#3cbf3c" stroke-width="1.3"/>
<rect x="1" y="9" width="7" height="1.6" fill="#28b828"/></svg>
<div style="left:469px;top:233px;width:38px;height:16px;box-sizing:border-box;border:1px solid #7f9db9;background:#fff"></div>
<div class="t" style="left:475px;top:236px;font:10px/13px 'Liberation Sans',sans-serif;letter-spacing:0px;color:#000;transform:scaleX(0.86);transform-origin:0 0">0</div>
<div class="t" style="left:509px;top:234px;font:11px/13px 'Liberation Sans',sans-serif;letter-spacing:0px;color:#000;">%</div>
<div class="t" style="left:54px;width:300px;text-align:right;top:254px;font:11px/13px 'Liberation Sans',sans-serif;letter-spacing:-0.6px;color:#000">Size:</div>
<div style="left:361px;top:259px;width:100px;height:4px;background:#fafafa;border-radius:2px"></div>
<div style="left:362px;top:260px;width:96px;height:1px;background:#8e8d88;border-radius:1px 0 0 0"></div>
<div style="left:362px;top:261px;width:96px;height:1px;background:#f1efe2"></div>
<div style="left:362px;top:262px;width:96px;height:1px;background:#ffffff"></div>
<svg style="position:absolute;left:366px;top:255px" width="9" height="12" viewBox="0 0 9 12">
<defs><linearGradient id="th366_260" x1="0" y1="0" x2="0" y2="1"><stop offset="0" stop-color="#ffffff"/><stop offset="1" stop-color="#e4e4e0"/></linearGradient></defs>
<path d="M0.5 4.5 L4.5 0.5 L8.5 4.5 L8.5 11.5 L0.5 11.5 Z" fill="url(#th366_260)" stroke="#8a9ab0" stroke-width="1"/>
<path d="M0.7 4.6 L4.5 0.8 L8.3 4.6" fill="none" stroke="#3cbf3c" stroke-width="1.3"/>
<rect x="1" y="9" width="7" height="1.6" fill="#28b828"/></svg>
<div style="left:469px;top:253px;width:38px;height:16px;box-sizing:border-box;border:1px solid #7f9db9;background:#fff"></div>
<div style="left:475px;top:255px;width:5px;height:12px;background:#316ac5"></div>
<div class="t" style="left:475px;top:256px;font:10px/13px 'Liberation Sans',sans-serif;letter-spacing:0px;color:#fff;transform:scaleX(0.86);transform-origin:0 0">3</div>
<div class="t" style="left:509px;top:254px;font:11px/13px 'Liberation Sans',sans-serif;letter-spacing:0px;color:#000;">px</div>
<div class="t" style="left:54px;width:300px;text-align:right;top:313px;font:11px/13px 'Liberation Sans',sans-serif;letter-spacing:0.1px;color:#000">Contour:</div>
<svg style="position:absolute;left:358px;top:304px" width="43" height="31" viewBox="0 0 43 31">
<rect x="0" y="0" width="42" height="30" fill="#a0a0a0"/>
<rect x="1" y="0" width="41" height="30" fill="#000"/>
<rect x="2" y="1" width="29" height="28" fill="#fff"/>
<path d="M2 29 L31 1 L31 29 Z" fill="#8c8c8c"/>
<rect x="31" y="1" width="1" height="28" fill="#ffffff"/>
<rect x="32" y="1" width="9" height="28" fill="#e6e6e6"/>
<path d="M33 13 L39 13 L36 16 Z" fill="#000"/>
</svg>
<svg style="position:absolute;left:413px;top:312px" width="13" height="13" viewBox="0 0 13 13">
<defs><linearGradient id="cb413_312" x1="0" y1="0" x2="1" y2="1"><stop offset="0" stop-color="#dcdcd7"/><stop offset="1" stop-color="#ffffff"/></linearGradient></defs>
<rect x="0.5" y="0.5" width="12" height="12" fill="url(#cb413_312)" stroke="#1c5180"/></svg>
<div class="t" style="left:428px;top:313px;font:11px/13px 'Liberation Sans',sans-serif;letter-spacing:-0.6px;color:#000;">Anti-aliased</div>
<div class="t" style="left:54px;width:300px;text-align:right;top:340px;font:11px/13px 'Liberation Sans',sans-serif;letter-spacing:-0.4px;color:#000">Range:</div>
<div style="left:361px;top:345px;width:100px;height:4px;background:#fafafa;border-radius:2px"></div>
<div style="left:362px;top:346px;width:96px;height:1px;background:#8e8d88;border-radius:1px 0 0 0"></div>
<div style="left:362px;top:347px;width:96px;height:1px;background:#f1efe2"></div>
<div style="left:362px;top:348px;width:96px;height:1px;background:#ffffff"></div>
<svg style="position:absolute;left:407px;top:341px" width="9" height="12" viewBox="0 0 9 12">
<defs><linearGradient id="th407_346" x1="0" y1="0" x2="0" y2="1"><stop offset="0" stop-color="#ffffff"/><stop offset="1" stop-color="#e4e4e0"/></linearGradient></defs>
<path d="M0.5 4.5 L4.5 0.5 L8.5 4.5 L8.5 11.5 L0.5 11.5 Z" fill="url(#th407_346)" stroke="#8a9ab0" stroke-width="1"/>
<path d="M0.7 4.6 L4.5 0.8 L8.3 4.6" fill="none" stroke="#3cbf3c" stroke-width="1.3"/>
<rect x="1" y="9" width="7" height="1.6" fill="#28b828"/></svg>
<div style="left:469px;top:339px;width:38px;height:16px;box-sizing:border-box;border:1px solid #7f9db9;background:#fff"></div>
<div class="t" style="left:475px;top:342px;font:10px/13px 'Liberation Sans',sans-serif;letter-spacing:0px;color:#000;transform:scaleX(0.86);transform-origin:0 0">50</div>
<div class="t" style="left:509px;top:340px;font:11px/13px 'Liberation Sans',sans-serif;letter-spacing:0px;color:#000;">%</div>
<div class="t" style="left:54px;width:300px;text-align:right;top:360px;font:11px/13px 'Liberation Sans',sans-serif;letter-spacing:-0.15px;color:#000">Jitter:</div>
<div style="left:361px;top:365px;width:100px;height:4px;background:#fafafa;border-radius:2px"></div>
<div style="left:362px;top:366px;width:96px;height:1px;background:#8e8d88;border-radius:1px 0 0 0"></div>
<div style="left:362px;top:367px;width:96px;height:1px;background:#f1efe2"></div>
<div style="left:362px;top:368px;width:96px;height:1px;background:#ffffff"></div>
<svg style="position:absolute;left:358px;top:361px" width="9" height="12" viewBox="0 0 9 12">
<defs><linearGradient id="th358_366" x1="0" y1="0" x2="0" y2="1"><stop offset="0" stop-color="#ffffff"/><stop offset="1" stop-color="#e4e4e0"/></linearGradient></defs>
<path d="M0.5 4.5 L4.5 0.5 L8.5 4.5 L8.5 11.5 L0.5 11.5 Z" fill="url(#th358_366)" stroke="#8a9ab0" stroke-width="1"/>
<path d="M0.7 4.6 L4.5 0.8 L8.3 4.6" fill="none" stroke="#3cbf3c" stroke-width="1.3"/>
<rect x="1" y="9" width="7" height="1.6" fill="#28b828"/></svg>
<div style="left:469px;top:359px;width:38px;height:16px;box-sizing:border-box;border:1px solid #7f9db9;background:#fff"></div>
<div class="t" style="left:475px;top:362px;font:10px/13px 'Liberation Sans',sans-serif;letter-spacing:0px;color:#000;transform:scaleX(0.86);transform-origin:0 0">0</div>
<div class="t" style="left:509px;top:360px;font:11px/13px 'Liberation Sans',sans-serif;letter-spacing:0px;color:#000;">%</div>
<div style="left:337px;top:388px;width:81px;height:21px;box-sizing:border-box;border:1px solid #003c74;border-radius:3px;background:linear-gradient(to bottom,#ffffff 0%,#f4f4f0 40%,#ecebe6 80%,#d6d0c5 100%);"></div>
<div class="t" style="left:336px;width:81px;text-align:center;top:393px;font:11px/13px 'Liberation Sans',sans-serif;letter-spacing:-0.5px;color:#000">Make Default</div>
<div style="left:424px;top:388px;width:93px;height:21px;box-sizing:border-box;border:1px solid #003c74;border-radius:3px;background:linear-gradient(to bottom,#ffffff 0%,#f4f4f0 40%,#ecebe6 80%,#d6d0c5 100%);"></div>
<div class="t" style="left:423px;width:93px;text-align:center;top:393px;font:11px/13px 'Liberation Sans',sans-serif;letter-spacing:-0.55px;color:#000">Reset to Default</div>
</body></html>
